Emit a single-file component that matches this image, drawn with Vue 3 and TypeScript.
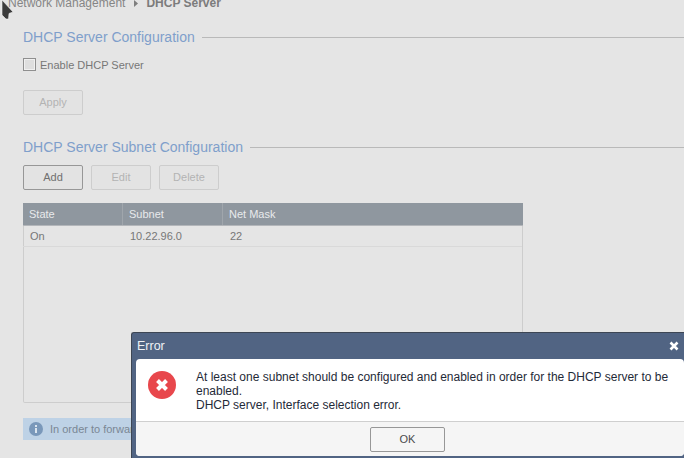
<script setup lang="ts">
const buttons = [
  { label: 'Add', disabled: false },
  { label: 'Edit', disabled: true },
  { label: 'Delete', disabled: true },
]
const columns = ['State', 'Subnet', 'Net Mask']
const row = ['On', '10.22.96.0', '22']
</script>

<template>
  <div class="page">
    <div class="crumbs">
      <span>Network Management</span>
      <svg class="crumb-arrow" width="4" height="7" viewBox="0 0 4 7"><path d="M0 0L4 3.500L0 7Z" fill="#7f7f7f" /></svg>
      <strong>DHCP Server</strong>
    </div>

    <section class="content">
      <div class="legend first"><span>DHCP Server Configuration</span><i></i></div>
      <label class="check"><span class="box"></span>Enable DHCP Server</label>
      <button class="btn apply" disabled>Apply</button>

      <div class="legend second"><span>DHCP Server Subnet Configuration</span><i></i></div>
      <div class="toolbar">
        <button v-for="b in buttons" :key="b.label" class="btn" :disabled="b.disabled">{{ b.label }}</button>
      </div>

      <div class="table">
        <div class="thead">
          <div v-for="c in columns" :key="c" class="th">{{ c }}</div>
        </div>
        <div class="tr">
          <div v-for="c in row" :key="c" class="td">{{ c }}</div>
        </div>
      </div>

      <div class="info">
        <svg width="14" height="14" viewBox="0 0 14 14">
          <circle cx="7" cy="7" r="7" fill="#7a98ba" />
          <rect x="6" y="6" width="2" height="5" fill="#dbe5ef" />
          <rect x="6" y="3" width="2" height="2" fill="#dbe5ef" />
        </svg>
        <span>In order to forward DHCP requests</span>
      </div>
    </section>

    <svg class="cursor" width="15" height="21" viewBox="0 0 15 21">
      <path d="M2 0L13 12L9 13.500L8.500 19L6 19L2 15Z" fill="#3c3c3c" stroke="#f4f4f4" stroke-width="0.600" />
    </svg>

    <div class="dialog">
      <div class="title">
        <span>Error</span>
        <svg class="close" width="10" height="10" viewBox="0 0 10 10"><path d="M1.500 1.500L8.500 8.500M8.500 1.500L1.500 8.500" stroke="#fff" stroke-width="2.600" /></svg>
      </div>
      <div class="panel">
        <div class="body">
          <svg class="err" width="28" height="28" viewBox="0 0 28 28">
            <circle cx="14" cy="14" r="14" fill="#e8474c" />
            <path d="M9.500 9.500L18.500 18.500M18.500 9.500L9.500 18.500" stroke="#fff" stroke-width="4" />
          </svg>
          <p>At least one subnet should be configured and enabled in order for the DHCP server to be enabled.<br />DHCP server, Interface selection error.</p>
        </div>
        <div class="foot"><button class="ok">OK</button></div>
      </div>
    </div>
  </div>
</template>

<style>
html, body { margin: 0; padding: 0; }
</style>

<style scoped>
.page {
  position: relative;
  width: 684px;
  height: 458px;
  overflow: hidden;
  background: #e5e5e5;
  font-family: "Liberation Sans", Arial, sans-serif;
  color: #7c7c7c;
}
.crumbs {
  display: flex;
  align-items: center;
  gap: 7px;
  height: 14px;
  margin-top: -4px;
  padding-left: 8px;
  font-size: 12px;
  line-height: 14px;
  color: #858585;
}
.crumbs strong { color: #7c7c7c; margin-left: 1px; }
.crumb-arrow { margin-left: 2px; }
.content { padding-left: 23px; }
.legend {
  display: flex;
  align-items: center;
  gap: 7px;
  height: 18px;
  font-size: 14px;
  color: #7f9fcb;
  white-space: nowrap;
}
.legend i { flex: 1; height: 1px; background: #b9b9b9; }
.first { margin-top: 18px; }
.second { margin-top: 23px; }
.check {
  display: flex;
  align-items: center;
  gap: 4px;
  margin-top: 12px;
  height: 13px;
  font-size: 11px;
  color: #777;
}
.box {
  width: 11px;
  height: 11px;
  border: 1px solid #8f8f8f;
  background: #dedede;
  box-shadow: inset 0 0 0 1px #f0f0f0;
}
.btn {
  display: block;
  width: 60px;
  height: 25px;
  padding: 0 0 1px;
  border: 1px solid #979797;
  border-radius: 2px;
  background: #e3e3e3;
  color: #707070;
  font: 11px "Liberation Sans", Arial, sans-serif;
}
.btn:disabled { border-color: #cdcdcd; color: #b3b3b3; }
.apply { margin-top: 19px; }
.toolbar { display: flex; gap: 8px; margin-top: 9px; }
.table {
  width: 500px;
  height: 200px;
  margin-top: 13px;
  box-sizing: border-box;
  border: 1px solid #cdcdcd;
  border-top: 0;
  border-radius: 0 0 2px 2px;
}
.thead {
  display: grid;
  grid-template-columns: 100px 100px 1fr;
  height: 22px;
  margin: 0 -1px;
  background: #8f979f;
  border-bottom: 1px solid #b3b6ba;
  color: #e8eaec;
}
.th {
  padding-left: 6px;
  font-size: 11px;
  line-height: 22px;
  border-right: 1px solid #a0a6ac;
}
.th:last-child { border-right: 0; }
.tr {
  display: grid;
  grid-template-columns: 100px 100px 1fr;
  height: 20px;
  margin-left: -1px;
  border-bottom: 1px solid #d9d9d9;
}
.td {
  padding-left: 7px;
  font-size: 11px;
  line-height: 20px;
  color: #777;
}
.info {
  display: flex;
  align-items: center;
  gap: 7px;
  width: 500px;
  height: 22px;
  margin-top: 15px;
  padding-left: 6px;
  box-sizing: border-box;
  background: #bed2e6;
  font-size: 11px;
  color: #7a8794;
  white-space: nowrap;
}
.cursor { position: absolute; left: 0; top: 0; }
.dialog {
  position: absolute;
  left: 131px;
  top: 332px;
  width: 553px;
  height: 126px;
  box-sizing: border-box;
  padding: 0 0 2px 4px;
  background: #516483;
  border-top: 1px solid #3d4654;
  border-left: 1px solid #3d4654;
  border-radius: 3px 0 0 0;
}
.title {
  display: flex;
  align-items: center;
  justify-content: space-between;
  height: 26px;
  padding: 0 5px 0 1px;
  font-size: 12.500px;
  color: #eef1f5;
}
.panel {
  height: 97px;
  background: #fff;
  border-radius: 4px;
  overflow: hidden;
  display: flex;
  flex-direction: column;
}
.body {
  display: flex;
  height: 63px;
  box-sizing: border-box;
  border-bottom: 1px solid #cfcfcf;
}
.err { flex: none; margin: 12px 0 0 12px; }
.body p {
  margin: 11px 0 0 20px;
  width: 480px;
  font-size: 12px;
  line-height: 14px;
  color: #1f2a38;
}
.foot {
  flex: 1;
  display: flex;
  justify-content: center;
  align-items: center;
  padding-right: 5px;
  background: #f5f5f5;
}
.ok {
  width: 75px;
  height: 25px;
  padding: 0;
  border: 1px solid #979797;
  border-radius: 2px;
  background: #f5f5f5;
  color: #4a4a4a;
  font: 11px "Liberation Sans", Arial, sans-serif;
}
</style>
